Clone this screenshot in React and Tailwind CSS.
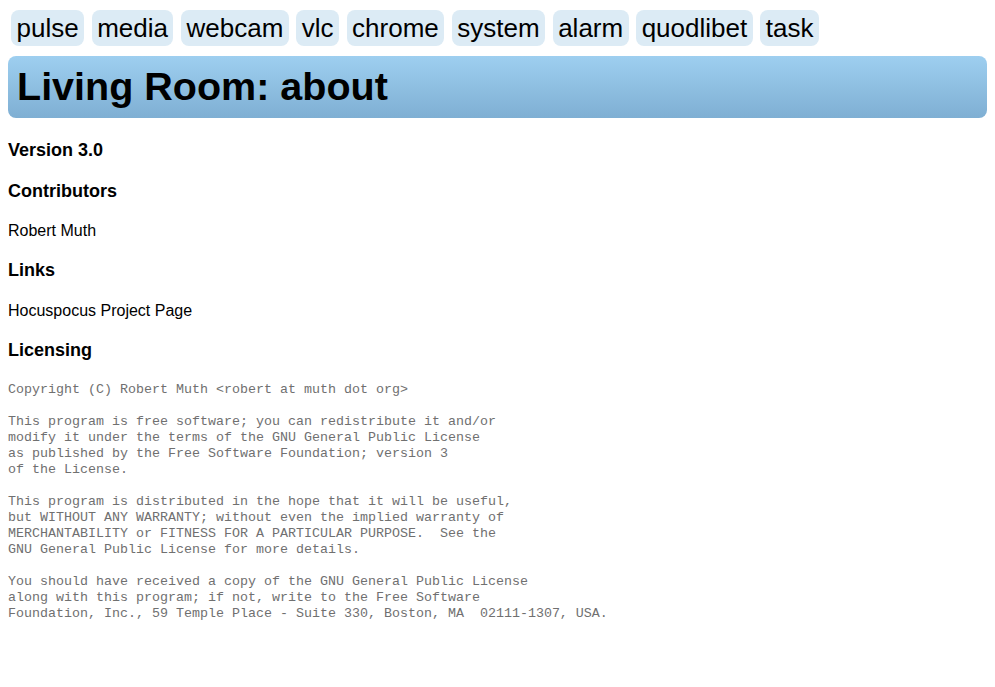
const tabs = ["pulse", "media", "webcam", "vlc", "chrome", "system", "alarm", "quodlibet", "task"];

const license = `Copyright (C) Robert Muth <robert at muth dot org>

This program is free software; you can redistribute it and/or
modify it under the terms of the GNU General Public License
as published by the Free Software Foundation; version 3
of the License.

This program is distributed in the hope that it will be useful,
but WITHOUT ANY WARRANTY; without even the implied warranty of
MERCHANTABILITY or FITNESS FOR A PARTICULAR PURPOSE.  See the
GNU General Public License for more details.

You should have received a copy of the GNU General Public License
along with this program; if not, write to the Free Software
Foundation, Inc., 59 Temple Place - Suite 330, Boston, MA  02111-1307, USA.`;

const App = () => {
  return (
    <div className="min-h-screen bg-white p-[8px] text-black font-['Liberation_Sans',Arial,sans-serif]">
      {/* nav tabs */}
      <div className="mt-[2px] ml-[3px] flex gap-[7.5px]">
        {tabs.map((t) => (
          <a
            key={t}
            className="rounded-[8px] bg-[#dcebf5] px-[5.5px] py-[3px] text-[26px] leading-[30px] cursor-pointer"
          >
            {t}
          </a>
        ))}
      </div>

      <div className="mt-[10px] flex h-[62px] items-center rounded-[8px] bg-gradient-to-b from-[#9ecff0] to-[#7fafd3] px-[9px]">
        <h1 className="text-[39.5px] font-bold leading-none">Living Room: about</h1>
      </div>

      <h3 className="mt-[22px] text-[18px] font-bold leading-[21px]">Version 3.0</h3>

      <h3 className="mt-[20px] text-[18px] font-bold leading-[21px]">Contributors</h3>
      <p className="mt-[20px] text-[16px] leading-[18px]">Robert Muth</p>

      <h3 className="mt-[20px] text-[18px] font-bold leading-[21px]">Links</h3>
      <p className="mt-[21px] text-[16px] leading-[18px]">
        <a className="cursor-pointer">Hocuspocus Project Page</a>
      </p>

      <h3 className="mt-[20px] text-[18px] font-bold leading-[21px]">Licensing</h3>
      <pre className="mt-[21px] whitespace-pre text-[13.33px] leading-[16px] text-[#707070] font-['Liberation_Mono','Courier_New',monospace]">
        {license}
      </pre>
    </div>
  );
};

export default App;
